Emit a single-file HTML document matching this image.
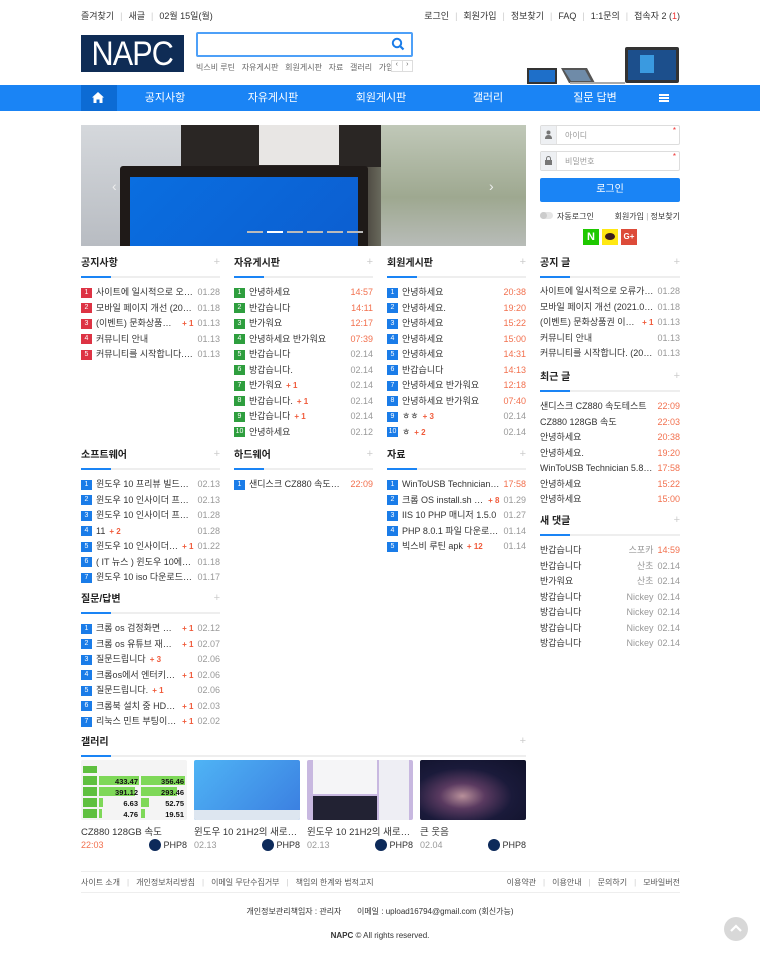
<!DOCTYPE html>
<html><head><meta charset="utf-8">
<style>
*{margin:0;padding:0;box-sizing:border-box}
body{width:760px;height:954px;background:#fff;font-family:"Liberation Sans","Noto Sans CJK KR",sans-serif;color:#333;position:relative;overflow:hidden;font-size:10px}
.a{position:absolute}
.top{top:9px;font-size:9px;color:#333;white-space:nowrap}
.top span.s{color:#ccc;margin:0 6px}
.nav{left:0;top:85px;width:760px;height:26px;background:#1a84f5}
.nav .it{position:absolute;top:0;line-height:26px;color:#fff;font-size:11px;transform:translateX(-50%)}
.sec{position:absolute;width:139px}
.sec h3{font-size:10px;font-weight:bold;color:#222;height:14px;line-height:14px;position:relative}
.sec h3:after{content:"+";position:absolute;right:0;top:-2px;color:#ccc;font-weight:normal;font-size:11px}
.ul{height:2px;background:#eee;margin-top:5px;position:relative}
.ul:before{content:"";position:absolute;left:0;top:0;width:30px;height:2px;background:#1a84f5}
.list{margin-top:7px}
.row{height:15.5px;line-height:15.5px;display:flex;align-items:center;white-space:nowrap;font-size:9px;color:#333}
.n{display:inline-block;width:11px;height:10px;line-height:10px;text-align:center;color:#fff;font-size:7px;margin-right:4px;flex:none}
.r .n{background:#dd3344}.g .n{background:#2e9e3e}.b .n{background:#1a7ce8}
.t{flex:1;overflow:hidden;text-overflow:ellipsis;min-width:0}
.c{color:#f05a3a;font-weight:bold;font-size:8px;margin-left:4px;flex:none}
.d{color:#999;margin-left:4px;flex:none}
.o{color:#f2704e;margin-left:4px;flex:none}
.nm{color:#999;margin-left:4px;flex:none}
.inp{position:absolute;left:540px;width:140px;height:20px;border:1px solid #ddd;border-radius:2px;background:#fff}
.inp .ic{position:absolute;left:0;top:0;width:16px;height:18px;background:#eef0f3;border-right:1px solid #e3e3e3}
.inp span{position:absolute;left:24px;top:4px;font-size:8px;color:#999}
.inp i{position:absolute;right:3px;top:0;color:#e33;font-size:8px;font-style:normal}
.gi{position:absolute;top:760px;width:106px;height:60px;border-radius:2px;overflow:hidden}
.gt{position:absolute;top:824px;font-size:9.5px;color:#333;white-space:nowrap;width:106px;overflow:hidden;text-overflow:ellipsis}
.gd{position:absolute;top:840px;font-size:9px;color:#999;width:106px}
.gd b{font-weight:normal;position:absolute;right:0;top:-1px;color:#333;display:flex;align-items:center}
.gd b:before{content:"";width:12px;height:12px;border-radius:50%;background:#0d2a5a;margin-right:2px}
.ft{font-size:8px;color:#555;white-space:nowrap}
.ft .s{color:#ccc;margin:0 7px}
</style></head><body>

<div class="a top" style="left:81px">즐겨찾기<span class="s">|</span>새글<span class="s">|</span>02월 15일(월)</div>
<div class="a top" style="right:80px">로그인<span class="s">|</span>회원가입<span class="s">|</span>정보찾기<span class="s">|</span>FAQ<span class="s">|</span>1:1문의<span class="s">|</span>접속자 2 <span style="color:#333">(</span><span style="color:#e33">1</span>)</div>

<div class="a" style="left:81px;top:35px;width:103px;height:37px;background:#0f2c55;color:#fff;font-size:34px;line-height:37px;text-align:center;letter-spacing:-1px;font-family:'Liberation Sans',sans-serif;border:1px solid #0f2c55"><span style="display:inline-block;transform:scaleX(.9)">NAPC</span></div>
<div class="a" style="left:196px;top:32px;width:217px;height:25px;border:2px solid #4ea0f8;border-radius:2px"></div>
<svg class="a" style="left:391px;top:37px" width="14" height="14" viewBox="0 0 14 14"><circle cx="6" cy="6" r="4.2" fill="none" stroke="#1a7ce8" stroke-width="2"/><path d="M9 9 L12.5 12.5" stroke="#1a7ce8" stroke-width="2.2"/></svg>
<div class="a" style="left:196px;top:62px;font-size:8px;color:#666;white-space:nowrap;width:195px;overflow:hidden">빅스비 루틴 &nbsp; 자유게시판 &nbsp; 회원게시판 &nbsp; 자료 &nbsp; 갤러리 &nbsp; 가입인사</div>
<div class="a" style="left:391px;top:60px;width:22px;height:12px;border:1px solid #ddd;font-size:7px;color:#666;display:flex"><span style="flex:1;text-align:center;border-right:1px solid #ddd">‹</span><span style="flex:1;text-align:center">›</span></div>

<svg class="a" style="left:525px;top:45px" width="155" height="40" viewBox="0 0 155 40">
<rect x="2" y="23" width="30" height="16" fill="#333"/><rect x="4" y="25" width="26" height="12" fill="#1e6fc9"/>
<path d="M36 23 L62 23 L70 38 L44 38 Z" fill="#555"/><path d="M39 25 L60 25 L66 36 L46 36Z" fill="#6f8ba8"/>
<rect x="45" y="37" width="55" height="2" fill="#aaa"/>
<rect x="100" y="2" width="54" height="36" rx="2" fill="#333"/><rect x="103" y="5" width="48" height="30" fill="#1c4f8c"/><rect x="115" y="10" width="14" height="18" fill="#3a9ae0"/>
</svg>

<div class="a nav">
<div class="a" style="left:81px;top:0;width:36px;height:26px;background:#0c6bd4"></div>
<svg class="a" style="left:92px;top:7px" width="12" height="11" viewBox="0 0 12 11"><path d="M6 0 L12 5.5 L10.5 5.5 L10.5 11 L7.5 11 L7.5 7.5 L4.5 7.5 L4.5 11 L1.5 11 L1.5 5.5 L0 5.5 Z" fill="#fff"/></svg>
<div class="it" style="left:165px">공지사항</div>
<div class="it" style="left:273px">자유게시판</div>
<div class="it" style="left:381px">회원게시판</div>
<div class="it" style="left:488px">갤러리</div>
<div class="it" style="left:595px">질문 답변</div>
<div class="a" style="left:659px;top:9px;width:10px;height:8px;border-top:2px solid #fff;border-bottom:2px solid #fff"></div>
<div class="a" style="left:659px;top:12px;width:10px;height:2px;background:#fff"></div>
</div>

<!-- slider -->
<div class="a" style="left:81px;top:125px;width:445px;height:121px;overflow:hidden;background:linear-gradient(90deg,#c9ccd0 0%,#d8dadc 15%,#3a3230 25%,#2a2220 60%,#aab29a 75%,#c8cfb8 85%,#d0d2d0 100%)">
<div class="a" style="left:0;top:0;width:110px;height:121px;background:linear-gradient(180deg,#d5d8dc,#b8bcc2)"></div>
<div class="a" style="left:100px;top:0;width:200px;height:42px;background:#2a2624"></div>
<div class="a" style="left:178px;top:0;width:80px;height:40px;background:#e8e6e4"></div>
<div class="a" style="left:300px;top:0;width:145px;height:121px;background:linear-gradient(180deg,#c0c8b8,#9ea890 60%,#b8bcb8)"></div>
<div class="a" style="left:39px;top:41px;width:248px;height:85px;background:#1f1a18;border-radius:3px"></div>
<div class="a" style="left:49px;top:52px;width:228px;height:75px;background:linear-gradient(135deg,#0a6ee0,#0c5ed0)"></div>
<div class="a" style="left:166px;top:106px;width:16px;height:2px;background:#bbb"></div>
<div class="a" style="left:186px;top:106px;width:16px;height:2px;background:#fff"></div>
<div class="a" style="left:206px;top:106px;width:16px;height:2px;background:#bbb"></div>
<div class="a" style="left:226px;top:106px;width:16px;height:2px;background:#bbb"></div>
<div class="a" style="left:246px;top:106px;width:16px;height:2px;background:#bbb"></div>
<div class="a" style="left:266px;top:106px;width:16px;height:2px;background:#bbb"></div>
<div class="a" style="left:31px;top:53px;color:#eee;font-size:14px">‹</div>
<div class="a" style="left:408px;top:53px;color:#eee;font-size:14px">›</div>
</div>

<!-- login -->
<div class="inp" style="top:125px"><div class="ic"></div><span>아이디</span><i>*</i></div>
<div class="inp" style="top:151px"><div class="ic"></div><span>비밀번호</span><i>*</i></div>
<svg class="a" style="left:545px;top:130px" width="7" height="9"><circle cx="3.5" cy="2.5" r="2" fill="#777"/><path d="M0 9 Q0 5 3.5 5 Q7 5 7 9Z" fill="#777"/></svg>
<svg class="a" style="left:545px;top:156px" width="7" height="9"><rect x="0" y="4" width="7" height="5" fill="#777"/><path d="M1.5 4 V2.5 A2 2 0 0 1 5.5 2.5 V4" fill="none" stroke="#777"/></svg>
<div class="a" style="left:540px;top:178px;width:140px;height:24px;background:#1a84f5;border-radius:2px;color:#fff;font-size:10px;line-height:24px;text-align:center">로그인</div>
<div class="a" style="left:540px;top:212px;width:13px;height:7px;border-radius:4px;background:#e5e5e5"></div>
<div class="a" style="left:540px;top:212px;width:7px;height:7px;border-radius:50%;background:#ccc"></div>
<div class="a" style="left:557px;top:211px;font-size:8px;color:#333">자동로그인</div>
<div class="a" style="right:80px;top:211px;font-size:8px;color:#333;white-space:nowrap">회원가입 <span style="color:#aaa">|</span> 정보찾기</div>
<div class="a" style="left:583px;top:229px;width:16px;height:16px;background:#1ec800;color:#fff;font-weight:bold;font-size:11px;line-height:16px;text-align:center">N</div>
<div class="a" style="left:602px;top:229px;width:16px;height:16px;background:#ffe812"><div class="a" style="left:3px;top:4px;width:10px;height:7px;border-radius:50%;background:#3c1e1e"></div></div>
<div class="a" style="left:621px;top:229px;width:16px;height:16px;background:#dd4b39;color:#fff;font-weight:bold;font-size:8px;line-height:16px;text-align:center">G+</div>

<!-- row 1 -->
<div class="sec r" style="left:81px;top:257px"><h3>공지사항</h3><div class="ul"></div><div class="list">
<div class="row"><span class="n">1</span><span class="t">사이트에 일시적으로 오류가 있었습니다</span><span class="d">01.28</span></div>
<div class="row"><span class="n">2</span><span class="t">모바일 페이지 개선 (2021.01.18)</span><span class="d">01.18</span></div>
<div class="row"><span class="n">3</span><span class="t">(이벤트) 문화상품권 이벤트</span><span class="c">+ 1</span><span class="d">01.13</span></div>
<div class="row"><span class="n">4</span><span class="t">커뮤니티 안내</span><span class="d">01.13</span></div>
<div class="row"><span class="n">5</span><span class="t">커뮤니티를 시작합니다. (2021-01-13)</span><span class="d">01.13</span></div>
</div></div>

<div class="sec g" style="left:234px;top:257px"><h3>자유게시판</h3><div class="ul"></div><div class="list">
<div class="row"><span class="n">1</span><span class="t">안녕하세요</span><span class="o">14:57</span></div>
<div class="row"><span class="n">2</span><span class="t">반갑습니다</span><span class="o">14:11</span></div>
<div class="row"><span class="n">3</span><span class="t">반가워요</span><span class="o">12:17</span></div>
<div class="row"><span class="n">4</span><span class="t">안녕하세요 반가워요</span><span class="o">07:39</span></div>
<div class="row"><span class="n">5</span><span class="t">반갑습니다</span><span class="d">02.14</span></div>
<div class="row"><span class="n">6</span><span class="t">방갑습니다.</span><span class="d">02.14</span></div>
<div class="row"><span class="n">7</span><span class="t" style="flex:none">반가워요</span><span class="c">+ 1</span><span style="flex:1"></span><span class="d">02.14</span></div>
<div class="row"><span class="n">8</span><span class="t" style="flex:none">반갑습니다.</span><span class="c">+ 1</span><span style="flex:1"></span><span class="d">02.14</span></div>
<div class="row"><span class="n">9</span><span class="t" style="flex:none">반갑습니다</span><span class="c">+ 1</span><span style="flex:1"></span><span class="d">02.14</span></div>
<div class="row"><span class="n">10</span><span class="t">안녕하세요</span><span class="d">02.12</span></div>
</div></div>

<div class="sec b" style="left:387px;top:257px"><h3>회원게시판</h3><div class="ul"></div><div class="list">
<div class="row"><span class="n">1</span><span class="t">안녕하세요</span><span class="o">20:38</span></div>
<div class="row"><span class="n">2</span><span class="t">안녕하세요.</span><span class="o">19:20</span></div>
<div class="row"><span class="n">3</span><span class="t">안녕하세요</span><span class="o">15:22</span></div>
<div class="row"><span class="n">4</span><span class="t">안녕하세요</span><span class="o">15:00</span></div>
<div class="row"><span class="n">5</span><span class="t">안녕하세요</span><span class="o">14:31</span></div>
<div class="row"><span class="n">6</span><span class="t">반갑습니다</span><span class="o">14:13</span></div>
<div class="row"><span class="n">7</span><span class="t">안녕하세요 반가워요</span><span class="o">12:18</span></div>
<div class="row"><span class="n">8</span><span class="t">안녕하세요 반가워요</span><span class="o">07:40</span></div>
<div class="row"><span class="n">9</span><span class="t" style="flex:none">ㅎㅎ</span><span class="c">+ 3</span><span style="flex:1"></span><span class="d">02.14</span></div>
<div class="row"><span class="n">10</span><span class="t" style="flex:none">ㅎ</span><span class="c">+ 2</span><span style="flex:1"></span><span class="d">02.14</span></div>
</div></div>

<!-- row 2 -->
<div class="sec b" style="left:81px;top:449px"><h3>소프트웨어</h3><div class="ul"></div><div class="list">
<div class="row"><span class="n">1</span><span class="t">윈도우 10 프리뷰 빌드에서 새로운</span><span class="d">02.13</span></div>
<div class="row"><span class="n">2</span><span class="t">윈도우 10 인사이더 프리뷰 빌드</span><span class="d">02.13</span></div>
<div class="row"><span class="n">3</span><span class="t">윈도우 10 인사이더 프리뷰 빌드</span><span class="d">01.28</span></div>
<div class="row"><span class="n">4</span><span class="t" style="flex:none">11</span><span class="c">+ 2</span><span style="flex:1"></span><span class="d">01.28</span></div>
<div class="row"><span class="n">5</span><span class="t">윈도우 10 인사이더 프리뷰</span><span class="c">+ 1</span><span class="d">01.22</span></div>
<div class="row"><span class="n">6</span><span class="t">( IT 뉴스 ) 윈도우 10에서 News</span><span class="d">01.18</span></div>
<div class="row"><span class="n">7</span><span class="t">윈도우 10 iso 다운로드 링크</span><span class="d">01.17</span></div>
</div></div>

<div class="sec b" style="left:234px;top:449px"><h3>하드웨어</h3><div class="ul"></div><div class="list">
<div class="row"><span class="n">1</span><span class="t">샌디스크 CZ880 속도테스트</span><span class="o">22:09</span></div>
</div></div>

<div class="sec b" style="left:387px;top:449px"><h3>자료</h3><div class="ul"></div><div class="list">
<div class="row"><span class="n">1</span><span class="t">WinToUSB Technician 5.8</span><span class="o">17:58</span></div>
<div class="row"><span class="n">2</span><span class="t" style="flex:0 1 auto">크롬 OS install.sh 파일</span><span class="c">+ 8</span><span style="flex:1"></span><span class="d">01.29</span></div>
<div class="row"><span class="n">3</span><span class="t">IIS 10 PHP 매니저 1.5.0</span><span class="d">01.27</span></div>
<div class="row"><span class="n">4</span><span class="t">PHP 8.0.1 파일 다운로드 (윈도우)</span><span class="d">01.14</span></div>
<div class="row"><span class="n">5</span><span class="t" style="flex:0 1 auto">빅스비 루틴 apk</span><span class="c">+ 12</span><span style="flex:1"></span><span class="d">01.14</span></div>
</div></div>

<!-- row 3 -->
<div class="sec b" style="left:81px;top:593px"><h3>질문/답변</h3><div class="ul"></div><div class="list">
<div class="row"><span class="n">1</span><span class="t" style="flex:0 1 auto">크롬 os 검정화면 질문</span><span class="c">+ 1</span><span style="flex:1"></span><span class="d">02.12</span></div>
<div class="row"><span class="n">2</span><span class="t">크롬 os 유튜브 재생시 문제</span><span class="c">+ 1</span><span class="d">02.07</span></div>
<div class="row"><span class="n">3</span><span class="t" style="flex:none">질문드립니다</span><span class="c">+ 3</span><span style="flex:1"></span><span class="d">02.06</span></div>
<div class="row"><span class="n">4</span><span class="t">크롬os에서 엔터키로 검색</span><span class="c">+ 1</span><span class="d">02.06</span></div>
<div class="row"><span class="n">5</span><span class="t" style="flex:none">질문드립니다.</span><span class="c">+ 1</span><span style="flex:1"></span><span class="d">02.06</span></div>
<div class="row"><span class="n">6</span><span class="t">크롬북 설치 중 HDD 미인식</span><span class="c">+ 1</span><span class="d">02.03</span></div>
<div class="row"><span class="n">7</span><span class="t">리눅스 민트 부팅이 안 됩니다</span><span class="c">+ 1</span><span class="d">02.02</span></div>
</div></div>

<!-- sidebar -->
<div class="sec" style="left:540px;top:257px;width:140px"><h3>공지 글</h3><div class="ul"></div><div class="list" style="margin-top:6px">
<div class="row"><span class="t">사이트에 일시적으로 오류가 있었습니다</span><span class="d">01.28</span></div>
<div class="row"><span class="t">모바일 페이지 개선 (2021.01.18)</span><span class="d">01.18</span></div>
<div class="row"><span class="t" style="flex:0 1 auto">(이벤트) 문화상품권 이벤트</span><span class="c">+ 1</span><span style="flex:1"></span><span class="d">01.13</span></div>
<div class="row"><span class="t">커뮤니티 안내</span><span class="d">01.13</span></div>
<div class="row"><span class="t">커뮤니티를 시작합니다. (2021-01-13)</span><span class="d">01.13</span></div>
</div></div>

<div class="sec" style="left:540px;top:371px;width:140px"><h3>최근 글</h3><div class="ul"></div><div class="list" style="margin-top:7px">
<div class="row"><span class="t">샌디스크 CZ880 속도테스트</span><span class="o">22:09</span></div>
<div class="row"><span class="t">CZ880 128GB 속도</span><span class="o">22:03</span></div>
<div class="row"><span class="t">안녕하세요</span><span class="o">20:38</span></div>
<div class="row"><span class="t">안녕하세요.</span><span class="o">19:20</span></div>
<div class="row"><span class="t">WinToUSB Technician 5.8 (x64)</span><span class="o">17:58</span></div>
<div class="row"><span class="t">안녕하세요</span><span class="o">15:22</span></div>
<div class="row"><span class="t">안녕하세요</span><span class="o">15:00</span></div>
</div></div>

<div class="sec" style="left:540px;top:515px;width:140px"><h3>새 댓글</h3><div class="ul"></div><div class="list" style="margin-top:7px">
<div class="row"><span class="t">반갑습니다</span><span class="nm">스포카</span><span class="o">14:59</span></div>
<div class="row"><span class="t">반갑습니다</span><span class="nm">산초</span><span class="d">02.14</span></div>
<div class="row"><span class="t">반가워요</span><span class="nm">산초</span><span class="d">02.14</span></div>
<div class="row"><span class="t">방갑습니다</span><span class="nm">Nickey</span><span class="d">02.14</span></div>
<div class="row"><span class="t">방갑습니다</span><span class="nm">Nickey</span><span class="d">02.14</span></div>
<div class="row"><span class="t">방갑습니다</span><span class="nm">Nickey</span><span class="d">02.14</span></div>
<div class="row"><span class="t">방갑습니다</span><span class="nm">Nickey</span><span class="d">02.14</span></div>
</div></div>

<!-- gallery -->
<div class="sec" style="left:81px;top:736px;width:445px"><h3>갤러리</h3><div class="ul"></div></div>
<div class="gi" style="left:81px;background:#f4f4f4">
<svg width="106" height="60" viewBox="0 0 106 60">
<rect x="2" y="6" width="14" height="7" fill="#5fc040"/>
<g font-family="Liberation Sans" font-weight="bold" font-size="7.5" fill="#111" text-anchor="end">
<rect x="2" y="16" width="14" height="9" fill="#5fc040"/><rect x="18" y="16" width="40" height="9" fill="#7ed858"/><rect x="60" y="16" width="44" height="9" fill="#7ed858"/><text x="57" y="24">433.47</text><text x="103" y="24">356.46</text>
<rect x="2" y="27" width="14" height="9" fill="#5fc040"/><rect x="18" y="27" width="36" height="9" fill="#7ed858"/><rect x="60" y="27" width="36" height="9" fill="#7ed858"/><text x="57" y="35">391.12</text><text x="103" y="35">293.46</text>
<rect x="2" y="38" width="14" height="9" fill="#5fc040"/><rect x="18" y="38" width="4" height="9" fill="#7ed858"/><rect x="60" y="38" width="8" height="9" fill="#7ed858"/><text x="57" y="46">6.63</text><text x="103" y="46">52.75</text>
<rect x="2" y="49" width="14" height="9" fill="#5fc040"/><rect x="18" y="49" width="3" height="9" fill="#7ed858"/><rect x="60" y="49" width="4" height="9" fill="#7ed858"/><text x="57" y="57">4.76</text><text x="103" y="57">19.51</text>
</g></svg></div>
<div class="gi" style="left:194px;background:linear-gradient(135deg,#4fb4f5,#3a7de0)"><div class="a" style="left:0;bottom:0;width:106px;height:10px;background:#dde6f0"></div></div>
<div class="gi" style="left:307px;background:#c8b8e0"><div class="a" style="left:6px;top:0;width:64px;height:34px;background:#f5f5f7"></div><div class="a" style="left:72px;top:0;width:30px;height:60px;background:#eeeef4"></div><div class="a" style="left:6px;top:36px;width:64px;height:24px;background:#223"></div></div>
<div class="gi" style="left:420px;background:radial-gradient(ellipse at 40% 60%,#b8909a 0%,#5a3a60 25%,#1a1a3a 55%,#10122a 100%)"></div>
<div class="gt" style="left:81px">CZ880 128GB 속도</div>
<div class="gt" style="left:194px">윈도우 10 21H2의 새로운 기능</div>
<div class="gt" style="left:307px">윈도우 10 21H2의 새로운 기능</div>
<div class="gt" style="left:420px">큰 웃음</div>
<div class="gd" style="left:81px;color:#f2704e">22:03<b>PHP8</b></div>
<div class="gd" style="left:194px">02.13<b>PHP8</b></div>
<div class="gd" style="left:307px">02.13<b>PHP8</b></div>
<div class="gd" style="left:420px">02.04<b>PHP8</b></div>

<!-- footer -->
<div class="a" style="left:81px;top:871px;width:599px;height:1px;background:#eee"></div>
<div class="a ft" style="left:81px;top:877px">사이트 소개<span class="s">|</span>개인정보처리방침<span class="s">|</span>이메일 무단수집거부<span class="s">|</span>책임의 한계와 법적고지</div>
<div class="a ft" style="right:80px;top:877px">이용약관<span class="s">|</span>이용안내<span class="s">|</span>문의하기<span class="s">|</span>모바일버전</div>
<div class="a" style="left:81px;top:892px;width:599px;height:1px;background:#eee"></div>
<div class="a ft" style="left:0;width:760px;text-align:center;top:906px;color:#333">개인정보관리책임자 : 관리자 &nbsp; &nbsp; &nbsp; 이메일 : upload16794@gmail.com (회신가능)</div>
<div class="a ft" style="left:0;width:760px;text-align:center;top:931px;color:#333"><b>NAPC</b> © All rights reserved.</div>
<div class="a" style="left:724px;top:917px;width:24px;height:24px;border-radius:50%;background:#d8d8d8"></div>
<svg class="a" style="left:730px;top:924px" width="12" height="8"><path d="M1 7 L6 2 L11 7" fill="none" stroke="#fff" stroke-width="2.2"/></svg>
</body></html>
